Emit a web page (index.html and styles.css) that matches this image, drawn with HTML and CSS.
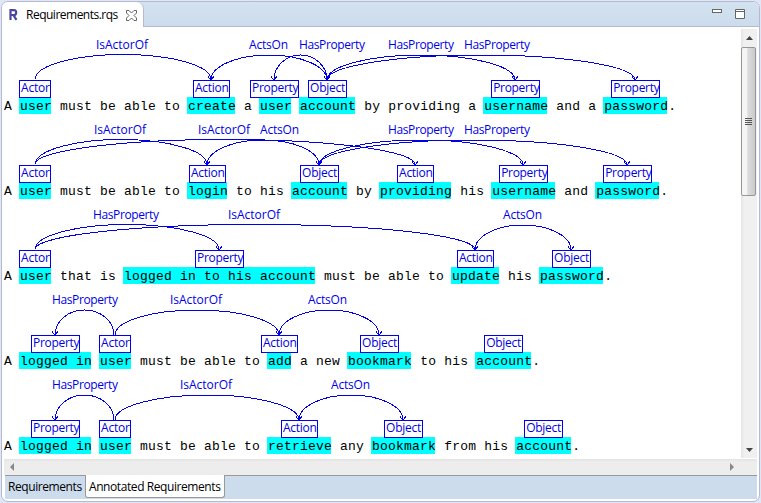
FILE: index.html
```html
<!DOCTYPE html>
<html lang="en">
<head>
<meta charset="utf-8">
<title>Requirements.rqs</title>
<link rel="stylesheet" href="styles.css">
</head>
<body>
<div class="editor">
  <header class="tabbar">
    <div class="filetab">
      <svg class="logo" width="10" height="12" viewBox="0 0 10 12"><path d="M1.5 11V1.2H5Q7.2 1.2 7.2 3.6T5 6H2M4.6 6.4L7.5 10.8" fill="none" stroke="#4747a0" stroke-width="2.2"/></svg>
      <span class="filename">Requirements.rqs</span>
      <svg class="close" width="11" height="11" viewBox="0 0 11 11"><path d="M.5 .5H3L5.5 3L8 .5H10.5V3L8 5.5L10.5 8V10.5H8L5.5 8L3 10.5H.5V8L3 5.5L.5 3Z" fill="#fff" stroke="#666" stroke-width="1"/></svg>
    </div>
    <div class="controls">
      <svg width="10" height="4" viewBox="0 0 10 4"><rect x=".5" y=".5" width="9" height="3" fill="#fff" stroke="#666"/></svg>
      <svg width="10" height="10" viewBox="0 0 10 10"><path d="M.5 .5H9.5V9.5H.5ZM.5 2.5H9.5" fill="#fff" stroke="#666"/></svg>
    </div>
  </header>
  <div class="body">
    <main class="doc">
      <section class="req">
        <svg class="rel" width="735" height="60" viewBox="3 28 735 60">
          <path d="M35 79A88 25 0 0 1 211 80M211 80A58 25 0 0 1 327 80M327 80A26.5 25 0 0 0 274 80M327 80A94 25 0 0 1 515 80M327 80A154 25 0 0 1 635 80"/>
          <path d="M208 76L211 81L214 76M324 76L327 81L330 76M271 76L274 81L277 76M512 76L515 81L518 76M632 76L635 81L638 76"/>
          <text x="96" y="49" textLength="52">IsActorOf</text><text x="249" y="49" textLength="39">ActsOn</text><text x="299" y="49" textLength="66">HasProperty</text><text x="388" y="49" textLength="66">HasProperty</text><text x="464" y="49" textLength="66">HasProperty</text>
        </svg>
        <p>A <mark>user<b class="actor">Actor</b></mark> must be able to <mark>create<b class="action">Action</b></mark> a <mark>user<b class="property shifted">Property</b></mark> <mark>account<b class="object">Object</b></mark> by providing a <mark>username<b class="property">Property</b></mark> and a <mark>password<b class="property">Property</b></mark>.</p>
      </section>
      <section class="req">
        <svg class="rel" width="735" height="60" viewBox="3 28 735 60">
          <path d="M35 79A86 25 0 0 1 207 80M35 79A190 25 0 0 1 415 80M207 80A56 25 0 0 1 319 80M319 80A102 25 0 0 1 523 80M319 80A154 25 0 0 1 627 80"/>
          <path d="M204 76L207 81L210 76M412 76L415 81L418 76M316 76L319 81L322 76M520 76L523 81L526 76M624 76L627 81L630 76"/>
          <text x="94" y="49" textLength="52">IsActorOf</text><text x="198" y="49" textLength="52">IsActorOf</text><text x="260" y="49" textLength="39">ActsOn</text><text x="388" y="49" textLength="66">HasProperty</text><text x="464" y="49" textLength="66">HasProperty</text>
        </svg>
        <p>A <mark>user<b class="actor">Actor</b></mark> must be able to <mark>login<b class="action">Action</b></mark> to his <mark>account<b class="object">Object</b></mark> by <mark>providing<b class="action">Action</b></mark> his <mark>username<b class="property">Property</b></mark> and <mark>password<b class="property">Property</b></mark>.</p>
      </section>
      <section class="req">
        <svg class="rel" width="735" height="60" viewBox="3 28 735 60">
          <path d="M35 79A92 25 0 0 1 219 80M35 79A220 25 0 0 1 475 80M475 80A48 25 0 0 1 571 80"/>
          <path d="M216 76L219 81L222 76M472 76L475 81L478 76M568 76L571 81L574 76"/>
          <text x="93" y="49" textLength="66">HasProperty</text><text x="228" y="49" textLength="52">IsActorOf</text><text x="503" y="49" textLength="39">ActsOn</text>
        </svg>
        <p>A <mark>user<b class="actor">Actor</b></mark> that is <mark>logged in to his account<b class="property">Property</b></mark> must be able to <mark>update<b class="action">Action</b></mark> his <mark>password<b class="object">Object</b></mark>.</p>
      </section>
      <section class="req">
        <svg class="rel" width="735" height="60" viewBox="3 28 735 60">
          <path d="M114 80A29.5 25 0 0 0 55 80M115 80A82 25 0 0 1 279 80M279 80A50 25 0 0 1 379 80"/>
          <path d="M52 76L55 81L58 76M276 76L279 81L282 76M376 76L379 81L382 76"/>
          <text x="52" y="49" textLength="66">HasProperty</text><text x="170" y="49" textLength="52">IsActorOf</text><text x="308" y="49" textLength="39">ActsOn</text>
        </svg>
        <p>A <mark>logged in<b class="property">Property</b></mark> <mark>user<b class="actor">Actor</b></mark> must be able to <mark>add<b class="action">Action</b></mark> a new <mark>bookmark<b class="object">Object</b></mark> to his <mark>account<b class="object">Object</b></mark>.</p>
      </section>
      <section class="req">
        <svg class="rel" width="735" height="60" viewBox="3 28 735 60">
          <path d="M114 80A29.5 25 0 0 0 55 80M115 80A92 25 0 0 1 299 80M299 80A52 25 0 0 1 403 80"/>
          <path d="M52 76L55 81L58 76M296 76L299 81L302 76M400 76L403 81L406 76"/>
          <text x="52" y="49" textLength="66">HasProperty</text><text x="180" y="49" textLength="52">IsActorOf</text><text x="331" y="49" textLength="39">ActsOn</text>
        </svg>
        <p>A <mark>logged in<b class="property">Property</b></mark> <mark>user<b class="actor">Actor</b></mark> must be able to <mark>retrieve<b class="action">Action</b></mark> any <mark>bookmark<b class="object">Object</b></mark> from his <mark>account<b class="object">Object</b></mark>.</p>
      </section>
    </main>
    <div class="vscroll">
      <svg class="up" width="7" height="4" viewBox="0 0 7 4"><path d="M0 4L3.5 0L7 4Z" fill="#444"/></svg>
      <div class="thumb"><i></i><i></i><i></i><i></i></div>
      <svg class="down" width="7" height="4" viewBox="0 0 7 4"><path d="M0 0L3.5 4L7 0Z" fill="#444"/></svg>
    </div>
  </div>
  <div class="hscroll">
    <svg width="4" height="8" viewBox="0 0 4 8"><path d="M4 0L0 4L4 8Z" fill="#888"/></svg>
    <svg width="4" height="8" viewBox="0 0 4 8"><path d="M0 0L4 4L0 8Z" fill="#888"/></svg>
  </div>
  <footer class="pages"><span class="page first">Requirements</span><span class="page active">Annotated Requirements</span></footer>
</div>
</body>
</html>
```
FILE: styles.css
```css
* { box-sizing: border-box; }
body {
  margin: 0;
  padding: 1px;
  height: 503px;
  overflow: hidden;
  background: #e1e6f6;
  font: 12px/16px "Open Sans", "Noto Sans", sans-serif;
  color: #000;
}
.editor {
  display: flex;
  flex-direction: column;
  width: 759px;
  height: 501px;
  border: 1px solid #b5b9d2;
  border-radius: 7px;
  background: #fff;
  overflow: hidden;
}
.tabbar {
  display: flex;
  justify-content: space-between;
  flex: none;
  height: 25px;
  border-bottom: 1px solid #b5b9d2;
  background: linear-gradient(#d3e2f0, #cddcec);
}
.filetab {
  display: flex;
  align-items: flex-start;
  width: 142px;
  height: 25px;
  padding: 5px 0 0 7px;
  background: #fff;
  border-right: 1px solid #b5b9d2;
  border-radius: 0 7px 0 0;
}
.logo { margin-top: 2px; }
.filename { width: 93px; margin-left: 7px; letter-spacing: -.5px; white-space: nowrap; }
.close { margin: 3px 0 0 7px; }
.controls { display: flex; gap: 13px; padding: 7px 14px 0 0; }
.body { display: flex; flex: none; height: 432px; }
.doc { flex: none; width: 739px; padding: 1px 0 0 1px; }
.req { position: relative; height: 85px; padding-top: 69px; }
.rel { position: absolute; left: 0; top: 0; overflow: visible; }
.rel path { fill: none; stroke: #0000e8; stroke-width: 1; shape-rendering: crispEdges; }
.rel text { fill: #0000e8; font-size: 12px; }
.req p {
  margin: 0;
  height: 17px;
  padding-left: 1px;
  font: 13px/19px "Liberation Mono", monospace;
  letter-spacing: .199px;
  white-space: pre;
}
mark {
  display: inline-block;
  position: relative;
  height: 17px;
  margin-left: -1px;
  padding-left: 1px;
  vertical-align: top;
  background: linear-gradient(#0ff, #0ff) 0 0 / calc(100% - 1px) 100% no-repeat;
  color: #000;
}
mark b {
  position: absolute;
  top: -17px;
  left: calc(50% - .5px);
  height: 18px;
  padding-left: 1px;
  border: 1px solid #0000f0;
  font: 12px/14px "Open Sans", "Noto Sans", sans-serif;
  color: #0000e0;
}
.actor { width: 32px; margin-left: -16px; letter-spacing: -.2px; }
.action { width: 37px; margin-left: -18px; letter-spacing: -.3px; }
.property { width: 49px; margin-left: -24px; letter-spacing: -.3px; }
.property.shifted { margin-left: -25px; }
.object { width: 39px; margin-left: -19px; letter-spacing: -.25px; }
.vscroll {
  display: flex;
  flex-direction: column;
  align-items: center;
  width: 16px;
  height: 429px;
  margin-top: 2px;
  background: linear-gradient(90deg, #e3e3e3, #f0f0f0 3px);
}
.up { margin-top: 7px; }
.down { margin: auto 0 6px; }
.thumb {
  display: flex;
  flex-direction: column;
  align-items: center;
  align-self: flex-start;
  justify-content: center;
  gap: 1px;
  width: 15px;
  height: 149px;
  margin-top: 7px;
  border: 1px solid #979797;
  border-radius: 2px;
  background: linear-gradient(90deg, #f5f5f5 0 35%, #dcdcde 45%, #c9cacc);
}
.thumb i { width: 7px; height: 1px; background: #555; }
.hscroll {
  display: flex;
  align-items: center;
  justify-content: space-between;
  flex: none;
  height: 16px;
  margin: 0 2px;
  padding: 0 23px 0 6px;
  background: linear-gradient(#e3e3e3, #ededed 3px);
}
.pages {
  display: flex;
  flex: none;
  height: 24px;
  margin: 0 2px 0 3px;
  border-top: 1px solid #999;
  background: #cddcec;
}
.page { height: 23px; padding-top: 3px; letter-spacing: -.42px; white-space: nowrap; }
.first { width: 80px; padding-left: 3px; }
.active {
  width: 140px;
  margin-top: -1px;
  padding: 4px 0 0 3px;
  border: 1px solid #999;
  border-top: 0;
  border-radius: 0 0 3px 3px;
  background: #fff;
}
```
